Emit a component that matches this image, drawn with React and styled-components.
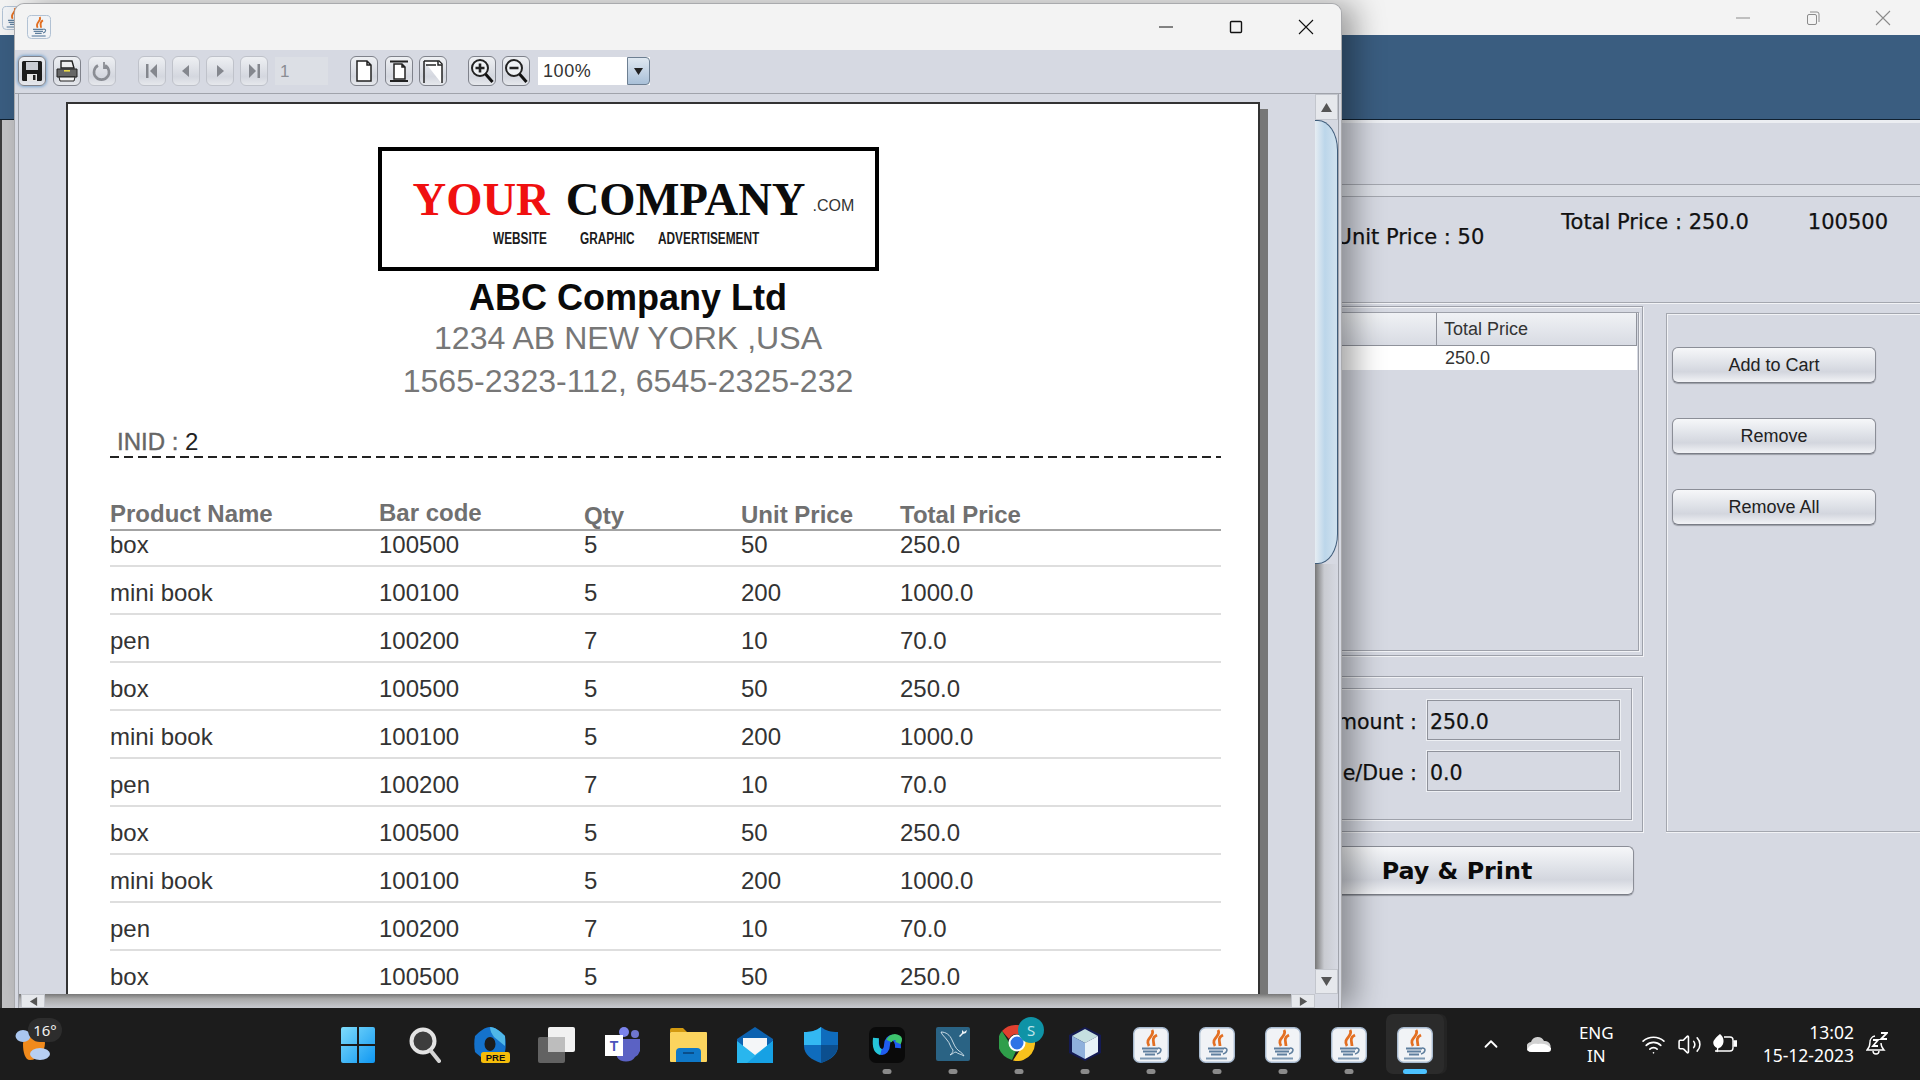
import React from "react";
import styled, { createGlobalStyle } from "styled-components";
import { ChevronUp, Volume2, Wifi } from "lucide-react";

const GlobalStyle = createGlobalStyle`
  html, body { margin: 0; padding: 0; background: #1c1c1c; }
  * { box-sizing: border-box; }
  body { width: 1920px; height: 1080px; overflow: hidden; font-family: "Liberation Sans", Arial, sans-serif; }
`;

/* ── Desktop shell ── */
const Desktop = styled.div`
  width: 1920px;
  height: 1080px;
  display: flex;
  flex-direction: column;
  overflow: hidden;
`;
const WindowArea = styled.div`
  position: relative;
  height: 1008px;
  overflow: hidden;
`;

/* ── Window behind (the billing form) ── */
const BackWindow = styled.div`
  height: 1008px;
  background: #d6d9e2;
  overflow: hidden;
`;
const BackTitle = styled.div`
  height: 35px;
  background: #f3f3f3;
  display: flex;
  align-items: center;
  padding: 0 2px;
`;
const Controls = styled.div`
  margin-left: auto;
  display: flex;
  color: ${(p) => p.$color};
`;
const ControlCell = styled.div`
  width: 70px;
  display: flex;
  justify-content: center;
`;
const BlueHeader = styled.div`
  height: 85px;
  background: #3a5d80;
  border-bottom: 1px solid #10202f;
`;
const BackBody = styled.div`
  height: 888px;
  border-left: 2px solid #3c3c3c;
  padding-left: 100px;
  background: linear-gradient(90deg, #c2c2c4 0 12px, #d6d9e2 12px);
`;
const UpperBand = styled.div`
  height: 65px;
  border-top: 3px solid #eceef2;
  border-bottom: 1px solid #a4a7af;
`;
const ThinBand = styled.div`
  height: 12px;
  background: #dcdfe6;
  border-bottom: 1px solid #a4a7af;
`;
const InfoPanel = styled.div`
  height: 106px;
  border-bottom: 1px solid #a4a7af;
  box-shadow: 0 1px 0 #f2f3f6;
  display: flex;
  justify-content: flex-end;
  gap: 59px;
  padding: 12px 32px 0 0;
  font: 21px/26px "DejaVu Sans", sans-serif;
  color: #111;
  -webkit-text-stroke: 0.25px #111;
`;
const InfoText = styled.div`
  margin-top: ${(p) => p.$drop || 0}px;
  margin-right: ${(p) => p.$after || 0}px;
  white-space: nowrap;
`;
const FormColumns = styled.div`
  display: flex;
  gap: 23px;
  padding-top: 3px;
`;
const LeftColumn = styled.div`
  width: 1541px;
  flex: none;
  display: flex;
  flex-direction: column;
`;
const EtchedBox = styled.div`
  border: 1px solid #9ea1aa;
  box-shadow: 1px 1px 0 #f2f3f6, inset 1px 1px 0 #f2f3f6;
`;
const CartPanel = styled(EtchedBox)`
  height: 350px;
  padding: 5px 3px 4px 0;
`;
const CartInner = styled(EtchedBox)`
  height: 100%;
  padding-right: 1px;
`;
const CartHeader = styled.div`
  height: 33px;
  display: flex;
  background: linear-gradient(#f0f2f5, #d8dbe3);
  border-bottom: 1px solid #8f929b;
  border-right: 1px solid #8f929b;
  font-size: 18px;
  line-height: 32px;
  color: #333;
`;
const CartHeaderCell = styled.div`
  width: ${(p) => (p.$grow ? "auto" : "1333px")};
  flex: ${(p) => (p.$grow ? 1 : "none")};
  padding-left: ${(p) => (p.$grow ? "7px" : 0)};
  border-right: ${(p) => (p.$grow ? "none" : "1px solid #8f929b")};
`;
const CartRow = styled.div`
  height: 24px;
  background: #fff;
  font-size: 18px;
  line-height: 25px;
  color: #333;
  padding-left: 1341px;
`;
const AmountPanel = styled(EtchedBox)`
  margin-top: 20px;
  height: 156px;
  padding: 11px 10px 11px 0;
`;
const AmountInner = styled(EtchedBox)`
  height: 100%;
  padding: 11px 11px 0 0;
  display: flex;
  flex-direction: column;
  gap: 11px;
`;
const AmountRow = styled.div`
  height: 40px;
  padding-top: 3px;
  display: flex;
  justify-content: flex-end;
  align-items: center;
  gap: 10px;
  font: 20.5px "DejaVu Sans", sans-serif;
  color: #111;
  -webkit-text-stroke: 0.25px #111;
`;
const AmountField = styled.div`
  width: 193px;
  height: 40px;
  margin-top: -3px;
  border: 1px solid #8f929b;
  box-shadow: 0 0 0 1px #eef0f4;
  padding-left: 2px;
  line-height: 43px;
  color: #111;
`;
const JavaButton = styled.div`
  border: 1px solid #8b8e97;
  border-bottom-color: #7a7d86;
  border-radius: 6px;
  background: linear-gradient(#f6f7f9 0%, #dfe2e8 45%, #d3d6de 70%, #f2f3f6 100%);
  box-shadow: 0 1px 1px #9a9da6;
  display: flex;
  align-items: center;
  justify-content: center;
  color: #222;
`;
const PayButton = styled(JavaButton)`
  align-self: flex-end;
  width: 354px;
  height: 49px;
  margin: 14px 9px 0 0;
  font: bold 23.8px "DejaVu Sans", sans-serif;
  color: #0b0b0b;
`;
const ActionPanel = styled.div`
  width: 270px;
  flex: none;
  height: 519px;
  margin-top: 7px;
  border: 1px solid #a4a7af;
  box-shadow: inset 1px 1px 0 #f2f3f6, 0 1px 0 #f2f3f6;
  padding: 33px 0 0 5px;
  display: flex;
  flex-direction: column;
  gap: 35px;
`;
const ActionButton = styled(JavaButton)`
  width: 204px;
  height: 36px;
  font-size: 18px;
`;

/* ── Report viewer window ── */
const ViewerWindow = styled.div`
  position: absolute;
  left: 15px;
  top: 4px;
  width: 1326px;
  height: 1004px;
  display: flex;
  flex-direction: column;
  background: #d6d9e2;
  border-radius: 9px 9px 0 0;
  box-shadow: 0 0 0 1px #a9aaad, 14px 0 30px rgba(0, 0, 0, 0.36);
  overflow: hidden;
`;
const ViewerTitle = styled.div`
  height: 46px;
  flex: none;
  background: #f3f3f3;
  display: flex;
  align-items: center;
  padding-left: 12px;
`;
const Toolbar = styled.div`
  height: 44px;
  flex: none;
  display: flex;
  align-items: center;
  padding: 0 0 1px 3px;
  gap: 6px;
  background: #d6d9e2;
  border-bottom: 1px solid #a0a3ab;
`;
const ToolButton = styled.div`
  width: 28px;
  height: 30px;
  flex: none;
  margin-left: ${(p) => p.$space || 0}px;
  display: flex;
  align-items: center;
  justify-content: center;
  border-radius: 6px;
  border: 1px solid ${(p) => (p.$off ? "#bfc2ca" : "#7f828b")};
  background: linear-gradient(#eef0f3, #d4d7df 70%, #e6e8ec);
  box-shadow: ${(p) => (p.$glow ? "0 0 3px 1px #7fa8d0" : "none")};
`;
const PageInput = styled.div`
  width: 53px;
  height: 28px;
  margin-left: 1px;
  background: #dcdfe5;
  font-size: 17px;
  line-height: 30px;
  color: #8a8d94;
  padding-left: 5px;
`;
const ZoomCombo = styled.div`
  width: 112px;
  height: 28px;
  margin-left: 2px;
  display: flex;
  background: #fff;
  font: 18px/28px "Liberation Sans", sans-serif;
  letter-spacing: 0.6px;
  color: #333;
  padding-left: 5px;
  justify-content: space-between;
`;
const ComboArrow = styled.div`
  width: 23px;
  background: linear-gradient(#dfe8f1, #a9c0d8);
  border: 1px solid #6d7f92;
  border-radius: 0 4px 4px 0;
  display: flex;
  align-items: center;
  justify-content: center;
`;
const ViewerBody = styled.div`
  flex: 1;
  min-height: 0;
  display: flex;
  padding-left: 3px;
`;
const ScrollPane = styled.div`
  width: 1297px;
  flex: none;
  border-left: 1px solid #a0a3ab;
  display: flex;
  flex-direction: column;
`;
const PageViewport = styled.div`
  height: 900px;
  flex: none;
  overflow: hidden;
  padding: 8px 0 0 47px;
`;
const Page = styled.div`
  width: 1194px;
  height: 1100px;
  background: #fff;
  border: 2px solid #333;
  border-bottom: none;
  box-shadow: 8px 7px 0 #777;
  padding: 43px 0 0 42px;
`;
const Letterhead = styled.div`
  width: 1036px;
  display: flex;
  flex-direction: column;
  align-items: center;
`;
const LogoBox = styled.div`
  width: 501px;
  height: 124px;
  border: 4px solid #000;
  padding: 22px 0 0 31px;
`;
const LogoLine = styled.div`
  display: flex;
  align-items: baseline;
  height: 52px;
  font: bold 46.6px/52px "Liberation Serif", serif;
  color: #0c0c0c;
`;
const LogoRed = styled.span`
  color: #f01010;
  margin-right: 16px;
`;
const LogoCom = styled.span`
  align-self: flex-start;
  margin: 24px 0 0 7px;
  font: 16px/18px "Liberation Sans", sans-serif;
  color: #333;
`;
const LogoTags = styled.div`
  display: flex;
  padding-left: 80px;
  margin-top: 5px;
  font: bold 16px/18px "Liberation Sans", sans-serif;
  color: #1c1c1c;
`;
const LogoTag = styled.span`
  width: ${(p) => p.$slot}px;
  flex: none;
  white-space: nowrap;
  transform: scaleX(0.74);
  transform-origin: left center;
`;
const CompanyName = styled.div`
  margin-top: 7px;
  font-size: 36px;
  font-weight: bold;
  line-height: 40px;
  color: #0a0a0a;
`;
const CompanyLine = styled.div`
  font-size: 32.1px;
  line-height: ${(p) => p.$line}px;
  margin-top: ${(p) => p.$top || 0}px;
  color: #777;
  white-space: nowrap;
`;
const InvoiceId = styled.div`
  margin: 25px 0 0 7px;
  font-size: 24px;
  line-height: 28px;
  color: #666;
  -webkit-text-stroke: 0.4px #666;
`;
const InvoiceNo = styled.span`
  color: #222;
  -webkit-text-stroke: 0;
`;
const DashedRule = styled.div`
  height: 2px;
  width: 1111px;
  background: repeating-linear-gradient(90deg, #222 0 9px, transparent 9px 14px);
`;
const ReportTable = styled.div`
  width: 1111px;
  margin-top: 40px;
`;
const columns = "269px 205px 157px 159px 1fr";
const HeadRow = styled.div`
  display: grid;
  grid-template-columns: ${columns};
  height: 33px;
  border-bottom: 2px solid #a3a3a3;
  font-size: 24px;
  font-weight: bold;
  line-height: 28px;
  color: #707070;
`;
const HeadCell = styled.div`
  margin-top: ${(p) => p.$drop}px;
`;
const BodyRow = styled.div`
  display: grid;
  grid-template-columns: ${columns};
  align-items: end;
  height: 48px;
  padding-bottom: 6px;
  border-bottom: 2px solid #dedede;
  font-size: 24px;
  line-height: 28px;
  color: #333;
  &:first-child {
    height: 36px;
  }
`;

/* ── Java-look scrollbars ── */
const HScroll = styled.div`
  flex: 1;
  display: flex;
  padding-left: 2px;
  background: linear-gradient(#777, #aaa 35%, #c8cad0);
`;
const ScrollArrow = styled.div`
  width: ${(p) => p.$w}px;
  height: ${(p) => p.$h}px;
  flex: none;
  display: flex;
  align-items: center;
  justify-content: center;
  background: #e6e8ec;
  border: 1px solid #c3c6cd;
`;
const HSpacer = styled.div`
  flex: 1;
`;
const VScroll = styled.div`
  width: 23px;
  flex: none;
  display: flex;
  flex-direction: column;
`;
const VThumb = styled.div`
  height: 444px;
  flex: none;
  background: linear-gradient(90deg, #e6edf3, #bcd6ea 45%, #cde0ee 90%);
  border: 1px solid #3f5c7a;
  border-left: none;
  border-radius: 0 20px 20px 0 / 0 30px 30px 0;
`;
const VTrack = styled.div`
  height: 405px;
  flex: none;
  background: linear-gradient(90deg, #777, #c9cbd1 40%, #d6d9e2);
`;
const WindowEdge = styled.div`
  width: 3px;
  flex: none;
  border-left: 1px solid #a0a3ab;
`;

/* ── Taskbar ── */
const Taskbar = styled.div`
  height: 72px;
  flex: none;
  display: flex;
  align-items: stretch;
  background: #1c1c1c;
  color: #fff;
  font-family: "Noto Sans", sans-serif;
`;
const WeatherSlot = styled.div`
  width: 326px;
  flex: none;
  position: relative;
  padding: 19px 0 0 15px;
`;
const TempBadge = styled.div`
  position: absolute;
  left: 28px;
  top: 10px;
  width: 34px;
  height: 24px;
  border-radius: 12px;
  background: #2d2d2d;
  font-size: 15px;
  line-height: 24px;
  text-align: center;
  color: #f2f2f2;
`;
const AppCell = styled.div`
  width: 66px;
  flex: none;
  position: relative;
  display: flex;
  justify-content: center;
  align-items: flex-start;
  padding-top: ${(p) => p.$pad ?? 19}px;
`;
const ActiveTile = styled.div`
  position: absolute;
  left: 4px;
  top: 6px;
  width: 58px;
  height: 60px;
  border-radius: 7px;
  background: #2b2b2b;
  box-shadow: 3px 0 0 #242424;
`;
const RunningDot = styled.div`
  position: absolute;
  left: 50%;
  bottom: 6px;
  width: ${(p) => (p.$active ? 24 : 9)}px;
  height: 5px;
  transform: translateX(-50%);
  border-radius: 3px;
  background: ${(p) => (p.$active ? "#4cc2ff" : "#8a8a8a")};
`;
const AppIcon = styled.div`
  position: relative;
  display: flex;
  margin-left: ${(p) => p.$shift || 0}px;
`;
const Tray = styled.div`
  margin-left: auto;
  padding-right: 32px;
  display: flex;
  align-items: center;
`;
const TrayIcon = styled.div`
  margin-left: ${(p) => p.$gap}px;
  display: flex;
`;
const LangBox = styled.div`
  margin-left: 28px;
  font-size: 17px;
  line-height: 23px;
  text-align: center;
`;
const Clock = styled.div`
  margin-left: 26px;
  font-size: 17.5px;
  line-height: 23px;
  text-align: right;
  white-space: nowrap;
`;

/* ── Drawings ── */
const JavaIcon = ({ size = 24 }) => (
  <svg width={size} height={size} viewBox="0 0 36 36">
    <rect x="0.7" y="0.7" width="34.6" height="34.6" rx="6" fill="#f1f3f6" stroke="#a9bbd0" strokeWidth="1.4" />
    <path d="M19 3c4 6-8 8-3 16M24 8c-6 3-3 7-3 11" fill="none" stroke="#e36f22" strokeWidth="2.8" />
    <path d="M9 21.5h16M10 24.5h14M12 27.5h10" stroke="#5f7f9e" strokeWidth="2" />
    <path d="M25 21c5 0 3 5-1 6" fill="none" stroke="#5f7f9e" strokeWidth="1.6" />
    <path d="M7 31.5h21" stroke="#7f9ab4" strokeWidth="2" />
  </svg>
);
const Minimize = () => (
  <svg width="16" height="16" viewBox="0 0 16 16"><path d="M1 8h14" stroke="currentColor" /></svg>
);
const Maximize = () => (
  <svg width="16" height="16" viewBox="0 0 16 16"><rect x="2.5" y="2.5" width="11" height="11" rx="1" fill="none" stroke="currentColor" strokeWidth="1.4" /></svg>
);
const Restore = () => (
  <svg width="16" height="16" viewBox="0 0 16 16" fill="none" stroke="currentColor">
    <rect x="2.5" y="4.5" width="9" height="10" rx="1.5" />
    <path d="M5 2h7a2 2 0 0 1 2 2v8" />
  </svg>
);
const CloseX = () => (
  <svg width="16" height="16" viewBox="0 0 16 16"><path d="M1 1l14 14M15 1L1 15" stroke="currentColor" strokeWidth="1.1" /></svg>
);
const Tri = ({ dir, size = 10, color = "#555" }) => {
  const pts = { up: "5,1 10,9 0,9", down: "0,1 10,1 5,9", left: "9,0 9,10 1,5", right: "1,0 1,10 9,5" };
  return (
    <svg width={size} height={size} viewBox="0 0 10 10"><polygon points={pts[dir]} fill={color} /></svg>
  );
};
const SaveIcon = () => (
  <svg width="22" height="24" viewBox="0 0 22 24">
    <rect x="1" y="2" width="20" height="20" rx="1.5" fill="#1c1c1c" />
    <rect x="5" y="3" width="12" height="8" fill="#c9ccd2" />
    <rect x="6" y="15" width="10" height="7" fill="#e6e6e6" />
    <rect x="12" y="16" width="2.5" height="5" fill="#222" />
  </svg>
);
const PrintIcon = () => (
  <svg width="24" height="24" viewBox="0 0 24 24">
    <path d="M6 2h11l2 7H6z" fill="#eee" stroke="#222" strokeWidth="1.4" />
    <path d="M2 10h20v8H2z" fill="#666" stroke="#222" />
    <rect x="9" y="11" width="6" height="1.6" fill="#e8d84a" />
    <path d="M4 18h16l-1 4H5z" fill="#f2f2f2" stroke="#222" />
  </svg>
);
const ReloadIcon = () => (
  <svg width="20" height="22" viewBox="0 0 20 22" fill="none" stroke="#8a8d94" strokeWidth="2.6">
    <path d="M6 5.5a7.5 7.5 0 1 0 7 0" />
    <path d="M12 2v6h5" strokeWidth="1.8" />
  </svg>
);
const NavIcon = ({ kind }) => (
  <svg width="16" height="18" viewBox="0 0 16 18" fill="#84878e">
    {kind === "first" && <><rect x="2" y="2" width="2.5" height="14" /><polygon points="13,2 13,16 6,9" /></>}
    {kind === "prev" && <polygon points="11,3 11,15 4,9" />}
    {kind === "next" && <polygon points="5,3 5,15 12,9" />}
    {kind === "last" && <><rect x="11.5" y="2" width="2.5" height="14" /><polygon points="3,2 3,16 10,9" /></>}
  </svg>
);
const PageIcon = ({ kind }) => (
  <svg width="22" height="24" viewBox="0 0 22 24" fill="#fff" stroke="#222" strokeWidth="1.5">
    {kind === "actual" && <path d="M4 2h10l4 4v16H4zM14 2v4h4" />}
    {kind === "width" && <><path d="M6 5h8l3 3v12H6zM14 5v3h3" /><path d="M2 2.5h18M2 22h18" strokeWidth="1.8" /></>}
    {kind === "fit" && <><path d="M2 2h15l3 3v20" /><path d="M2 2v22" /><path d="M16 2v4h4" /><path d="M4 6h10" /></>}
  </svg>
);
const ZoomIcon = ({ plus }) => (
  <svg width="24" height="26" viewBox="0 0 24 26">
    <circle cx="10" cy="10" r="8" fill="#eef1f4" stroke="#222" strokeWidth="2" />
    <path d="M5.5 10h9" stroke="#222" strokeWidth="2.6" />
    {plus && <path d="M10 5.5v9" stroke="#222" strokeWidth="2.6" />}
    <path d="M15.5 16l7 8" stroke="#111" strokeWidth="3" />
  </svg>
);

const WeatherIcon = () => (
  <svg width="36" height="33" viewBox="0 0 36 33">
    <path d="M9 9h15a7 7 0 0 1 6 7c0 9-7 17-15 17-5 0-7-8-7-16z" fill="#f08a1c" />
    <ellipse cx="8" cy="9" rx="7.5" ry="6" fill="#a9c6ef" />
    <ellipse cx="25" cy="27" rx="10" ry="6" fill="#b7cff2" />
  </svg>
);
const WindowsLogo = () => (
  <svg width="36" height="36" viewBox="0 0 36 36">
    <defs>
      <linearGradient id="winGrad" x1="0" y1="0" x2="1" y2="1">
        <stop offset="0" stopColor="#7fdcfb" />
        <stop offset="1" stopColor="#0f97f2" />
      </linearGradient>
    </defs>
    <path d="M1 2a2 2 0 0 1 2-2h14v17H1zM19 0h14a2 2 0 0 1 2 2v15H19zM1 19h16v17H3a2 2 0 0 1-2-2zM19 19h16v15a2 2 0 0 1-2 2H19z" fill="url(#winGrad)" />
  </svg>
);
const SearchIcon = () => (
  <svg width="32" height="36" viewBox="0 0 32 36">
    <circle cx="14" cy="14" r="11.5" fill="#3d3d3d" stroke="#e4e4e4" strokeWidth="4" />
    <path d="M22 24l8 10" stroke="#d5d5d5" strokeWidth="4" strokeLinecap="round" />
  </svg>
);
const EdgeIcon = () => (
  <svg width="36" height="36" viewBox="0 0 36 36">
    <path d="M16 0c5 0 10 4 15 9 1 5 1 11 0 16-5 5-10 8-15 8S6 30 1 25C0 20 0 14 1 9c5-5 10-9 15-9z" fill="#1472cc" />
    <path d="M16 0c5 0 10 4 15 9v10L20 10C18 7 16 4 16 0z" fill="#4fb7e8" />
    <ellipse cx="16" cy="17" rx="5.5" ry="7" fill="#1c1c1c" />
    <rect x="7" y="25" width="29" height="11" rx="2.5" fill="#f5bd0a" />
    <text x="21.5" y="34" textAnchor="middle" fontFamily="Liberation Sans" fontWeight="bold" fontSize="9.5" fill="#111">PRE</text>
  </svg>
);
const TaskViewIcon = () => (
  <svg width="38" height="36" viewBox="0 0 38 36">
    <rect x="10" y="0" width="27" height="25" rx="2" fill="#f1f1f1" />
    <rect x="0" y="10" width="27" height="26" rx="2" fill="#6a6a6a" fillOpacity="0.9" />
    <rect x="10" y="10" width="17" height="15" fill="#bdbdbd" />
  </svg>
);
const TeamsIcon = () => (
  <svg width="36" height="36" viewBox="0 0 36 36">
    <circle cx="30" cy="7" r="4" fill="#6f76cf" />
    <circle cx="19" cy="5" r="5" fill="#7b83eb" />
    <path d="M10 12h25v12a10 10 0 0 1-5 6c-3 6-15 6-18 0z" fill="#5b62c4" />
    <rect x="0" y="8" width="18" height="21" fill="#fff" />
    <text x="9" y="24" textAnchor="middle" fontFamily="Liberation Sans" fontWeight="bold" fontSize="14" fill="#4b53bc">T</text>
  </svg>
);
const FolderIcon = () => (
  <svg width="38" height="36" viewBox="0 0 38 36">
    <path d="M0 3a2 2 0 0 1 2-2h11l4 4H0z" fill="#d39a10" />
    <rect x="0" y="5" width="37" height="30" rx="1" fill="#fbd45e" />
    <path d="M6 35V25a4 4 0 0 1 4-4h17a4 4 0 0 1 4 4v10z" fill="#0f78c8" />
    <rect x="13" y="25" width="11" height="2" fill="#0a4e8a" />
  </svg>
);
const MailIcon = () => (
  <svg width="36" height="36" viewBox="0 0 36 36">
    <path d="M18 0l18 12v24H0V12z" fill="#0c62b0" />
    <path d="M6 11h24v9l-12 9-12-9z" fill="#f4f6f8" />
    <path d="M0 14l18 14 18-14v22H0z" fill="#29b6ee" />
    <path d="M36 14v22H10z" fill="#16a1e4" />
  </svg>
);
const ShieldIcon = () => (
  <svg width="34" height="36" viewBox="0 0 34 36">
    <path d="M17 0c5 4 10 5 17 5v14c0 9-8 14-17 17C8 33 0 28 0 19V5c7 0 12-1 17-5z" fill="#0f6cbd" />
    <path d="M17 0c-5 4-10 5-17 5v13h17z" fill="#33b8f2" />
    <path d="M17 18h17c0 9-8 15-17 18z" fill="#0c4f8f" />
  </svg>
);
const WebexIcon = () => (
  <svg width="36" height="36" viewBox="0 0 36 36">
    <rect width="36" height="36" rx="7" fill="#0a0a0a" />
    <path d="M7 13c-1 15 11 15 11 5 0-10 12-10 11 3" fill="none" stroke="#1f5cf0" strokeWidth="6" />
    <path d="M7 11c-1 8 1 13 5 14" fill="none" stroke="#25c4d8" strokeWidth="6" />
    <path d="M20 14c2-4 6-5 9-3 2 1 1 3 0 5" fill="none" stroke="#3ec46d" strokeWidth="6" />
  </svg>
);
const WorkbenchIcon = () => (
  <svg width="34" height="34" viewBox="0 0 34 34">
    <rect width="34" height="34" rx="2" fill="#2a6384" />
    <path d="M5 5c5 0 9 3 11 8 2 4 3 8 7 11 2 1 4 3 5 5-3-2-6-2-8-4-2 0-3 2-6 3 2-2 3-3 3-5-3-3-3-7-6-10-2-3-5-5-6-8z" fill="none" stroke="#d9e6ee" strokeWidth="0.9" />
    <path d="M26 3l2 2 3-2-1 3-3 1-3 3-1-1 3-3z" fill="#eef3f6" />
  </svg>
);
const ChromeIcon = () => (
  <svg width="46" height="44" viewBox="0 0 46 44">
    <g transform="translate(0 8)">
      <path d="M18 0a18 18 0 0 1 15.6 9H18a9 9 0 0 0-8 5L3 6A18 18 0 0 1 18 0z" fill="#e0402f" />
      <path d="M3 6l8 13a8 8 0 0 0 6 7l-4 9A18 18 0 0 1 3 6z" fill="#2f9e4a" />
      <path d="M33.6 9A18 18 0 0 1 14 35.6L24 20a8 8 0 0 0 0-11z" fill="#f7c21d" />
      <circle cx="18" cy="18" r="7.5" fill="#2f74e6" stroke="#fff" strokeWidth="2" />
    </g>
    <circle cx="32" cy="13" r="13" fill="#0f93a6" />
    <text x="32" y="18.5" textAnchor="middle" fontFamily="Noto Sans" fontSize="15" fill="#bfe4ea">S</text>
  </svg>
);
const CubeIcon = () => (
  <svg width="32" height="34" viewBox="0 0 32 34">
    <path d="M16 0l16 8v18l-16 8-16-8V8z" fill="#141a52" />
    <path d="M16 2l13 7-13 7-13-7z" fill="#c5dfe0" />
    <path d="M3 9l13 7v16L3 25z" fill="#8fb0dc" />
    <path d="M29 9L16 16v16l13-7z" fill="#e8f2f8" />
  </svg>
);
const CloudIcon = () => (
  <svg width="24" height="16" viewBox="0 0 24 16">
    <path d="M5 16a5 5 0 0 1-1-10 7 7 0 0 1 13-1 5.5 5.5 0 0 1 2 11z" fill="#d0d0d0" />
    <path d="M0 14c3-6 7-7 11-6 5-1 10 0 13 4v1a3 3 0 0 1-3 3H5c-2 0-4-1-5-2z" fill="#fff" />
  </svg>
);
const BatteryLeaf = () => (
  <svg width="24" height="20" viewBox="0 0 24 20" fill="none" stroke="#fff" strokeWidth="1.4">
    <path d="M11 3h6a3 3 0 0 1 3 3v8a3 3 0 0 1-3 3H2" />
    <path d="M20.5 7h3v5h-3" fill="#fff" />
    <path d="M7 0c4 3 5 9 1 13-1 1-3 1-4 1C0 12-1 8 2 5c1-2 3-3 5-5z" fill="#fff" stroke="none" />
    <path d="M5 13l-1 5" />
  </svg>
);
const SnoozeBell = () => (
  <svg width="22" height="24" viewBox="0 0 22 24" fill="none" stroke="#fff" strokeWidth="1.4">
    <path d="M9 4a6 6 0 0 0-5 6c0 4-1 6-3 8h17c-2-2-3-3-3-7" />
    <path d="M7 19a3 3 0 0 0 6 0" />
    <path d="M7 8h5l-5 6h5M15 1h6l-6 6h6" strokeWidth="1.8" />
  </svg>
);

const products = [
  ["box", "100500", "5", "50", "250.0"],
  ["mini book", "100100", "5", "200", "1000.0"],
  ["pen", "100200", "7", "10", "70.0"],
];
const rows = Array.from({ length: 10 }, (_, i) => products[i % 3]);
const heads = [
  ["Product Name", 2],
  ["Bar code", 1],
  ["Qty", 4],
  ["Unit Price", 3],
  ["Total Price", 3],
];
const apps = [
  { icon: <WindowsLogo />, shift: -3 },
  { icon: <SearchIcon /> },
  { icon: <EdgeIcon />, shift: 1 },
  { icon: <TaskViewIcon /> },
  { icon: <TeamsIcon /> },
  { icon: <FolderIcon /> },
  { icon: <MailIcon /> },
  { icon: <ShieldIcon /> },
  { icon: <WebexIcon />, running: true },
  { icon: <WorkbenchIcon />, running: true },
  { icon: <ChromeIcon />, running: true, pad: 9, shift: 6 },
  { icon: <CubeIcon />, running: true },
  { icon: <JavaIcon size={36} />, running: true },
  { icon: <JavaIcon size={36} />, running: true },
  { icon: <JavaIcon size={36} />, running: true },
  { icon: <JavaIcon size={36} />, running: true },
  { icon: <JavaIcon size={36} />, active: true },
];

export default function App() {
  return (
    <>
      <GlobalStyle />
      <Desktop>
        <WindowArea>
          <BackWindow>
            <BackTitle>
              <JavaIcon size={24} />
              <Controls $color="#8b8b8b">
                <ControlCell><Minimize /></ControlCell>
                <ControlCell><Restore /></ControlCell>
                <ControlCell><CloseX /></ControlCell>
              </Controls>
            </BackTitle>
            <BlueHeader />
            <BackBody>
              <UpperBand />
              <ThinBand />
              <InfoPanel>
                <InfoText $drop={15} $after={18}>Unit Price : 50</InfoText>
                <InfoText>Total Price : 250.0</InfoText>
                <InfoText>100500</InfoText>
              </InfoPanel>
              <FormColumns>
                <LeftColumn>
                  <CartPanel>
                    <CartInner>
                      <CartHeader>
                        <CartHeaderCell />
                        <CartHeaderCell $grow>Total Price</CartHeaderCell>
                      </CartHeader>
                      <CartRow>250.0</CartRow>
                    </CartInner>
                  </CartPanel>
                  <AmountPanel>
                    <AmountInner>
                      <AmountRow>Total Amount :<AmountField>250.0</AmountField></AmountRow>
                      <AmountRow>Balance/Due :<AmountField>0.0</AmountField></AmountRow>
                    </AmountInner>
                  </AmountPanel>
                  <PayButton>Pay &amp; Print</PayButton>
                </LeftColumn>
                <ActionPanel>
                  <ActionButton>Add to Cart</ActionButton>
                  <ActionButton>Remove</ActionButton>
                  <ActionButton>Remove All</ActionButton>
                </ActionPanel>
              </FormColumns>
            </BackBody>
          </BackWindow>

          <ViewerWindow>
            <ViewerTitle>
              <JavaIcon size={24} />
              <Controls $color="#111">
                <ControlCell><Minimize /></ControlCell>
                <ControlCell><Maximize /></ControlCell>
                <ControlCell><CloseX /></ControlCell>
              </Controls>
            </ViewerTitle>
            <Toolbar>
              <ToolButton $glow><SaveIcon /></ToolButton>
              <ToolButton $space={1}><PrintIcon /></ToolButton>
              <ToolButton $off $space={1}><ReloadIcon /></ToolButton>
              <ToolButton $off $space={16}><NavIcon kind="first" /></ToolButton>
              <ToolButton $off><NavIcon kind="prev" /></ToolButton>
              <ToolButton $off><NavIcon kind="next" /></ToolButton>
              <ToolButton $off><NavIcon kind="last" /></ToolButton>
              <PageInput>1</PageInput>
              <ToolButton $space={16}><PageIcon kind="actual" /></ToolButton>
              <ToolButton $space={1}><PageIcon kind="width" /></ToolButton>
              <ToolButton><PageIcon kind="fit" /></ToolButton>
              <ToolButton $space={15}><ZoomIcon plus /></ToolButton>
              <ToolButton><ZoomIcon /></ToolButton>
              <ZoomCombo>
                100%
                <ComboArrow><Tri dir="down" size={9} color="#222" /></ComboArrow>
              </ZoomCombo>
            </Toolbar>
            <ViewerBody>
              <ScrollPane>
                <PageViewport>
                  <Page>
                    <Letterhead>
                      <LogoBox>
                        <LogoLine>
                          <LogoRed>YOUR</LogoRed>COMPANY<LogoCom>.COM</LogoCom>
                        </LogoLine>
                        <LogoTags>
                          <LogoTag $slot={87}>WEBSITE</LogoTag>
                          <LogoTag $slot={78}>GRAPHIC</LogoTag>
                          <LogoTag $slot={105}>ADVERTISEMENT</LogoTag>
                        </LogoTags>
                      </LogoBox>
                      <CompanyName>ABC Company Ltd</CompanyName>
                      <CompanyLine $line={40}>1234 AB NEW YORK ,USA</CompanyLine>
                      <CompanyLine $line={44} $top={1}>1565-2323-112, 6545-2325-232</CompanyLine>
                    </Letterhead>
                    <InvoiceId>INID : <InvoiceNo>2</InvoiceNo></InvoiceId>
                    <DashedRule />
                    <ReportTable>
                      <HeadRow>
                        {heads.map(([label, drop]) => (
                          <HeadCell key={label} $drop={drop}>{label}</HeadCell>
                        ))}
                      </HeadRow>
                      <div>
                        {rows.map((row, i) => (
                          <BodyRow key={i}>
                            {row.map((cell, j) => <div key={j}>{cell}</div>)}
                          </BodyRow>
                        ))}
                      </div>
                    </ReportTable>
                  </Page>
                </PageViewport>
                <HScroll>
                  <ScrollArrow $w={24} $h={14}><Tri dir="left" size={9} /></ScrollArrow>
                  <HSpacer />
                  <ScrollArrow $w={24} $h={14}><Tri dir="right" size={9} /></ScrollArrow>
                </HScroll>
              </ScrollPane>
              <VScroll>
                <ScrollArrow $w={23} $h={26}><Tri dir="up" size={11} /></ScrollArrow>
                <VThumb />
                <VTrack />
                <ScrollArrow $w={23} $h={25}><Tri dir="down" size={11} /></ScrollArrow>
              </VScroll>
              <WindowEdge />
            </ViewerBody>
          </ViewerWindow>
        </WindowArea>

        <Taskbar>
          <WeatherSlot>
            <WeatherIcon />
            <TempBadge>16°</TempBadge>
          </WeatherSlot>
          {apps.map((app, i) => (
            <AppCell key={i} $pad={app.pad}>
              {app.active && <ActiveTile />}
              <AppIcon $shift={app.shift}>{app.icon}</AppIcon>
              {(app.running || app.active) && <RunningDot $active={app.active} />}
            </AppCell>
          ))}
          <Tray>
            <TrayIcon $gap={0}><ChevronUp size={22} strokeWidth={2} /></TrayIcon>
            <TrayIcon $gap={25}><CloudIcon /></TrayIcon>
            <LangBox>ENG<br />IN</LangBox>
            <TrayIcon $gap={27}><Wifi size={25} strokeWidth={1.6} /></TrayIcon>
            <TrayIcon $gap={11}><Volume2 size={25} strokeWidth={1.5} /></TrayIcon>
            <TrayIcon $gap={11}><BatteryLeaf /></TrayIcon>
            <Clock>13:02<br />15-12-2023</Clock>
            <TrayIcon $gap={12}><SnoozeBell /></TrayIcon>
          </Tray>
        </Taskbar>
      </Desktop>
    </>
  );
}
